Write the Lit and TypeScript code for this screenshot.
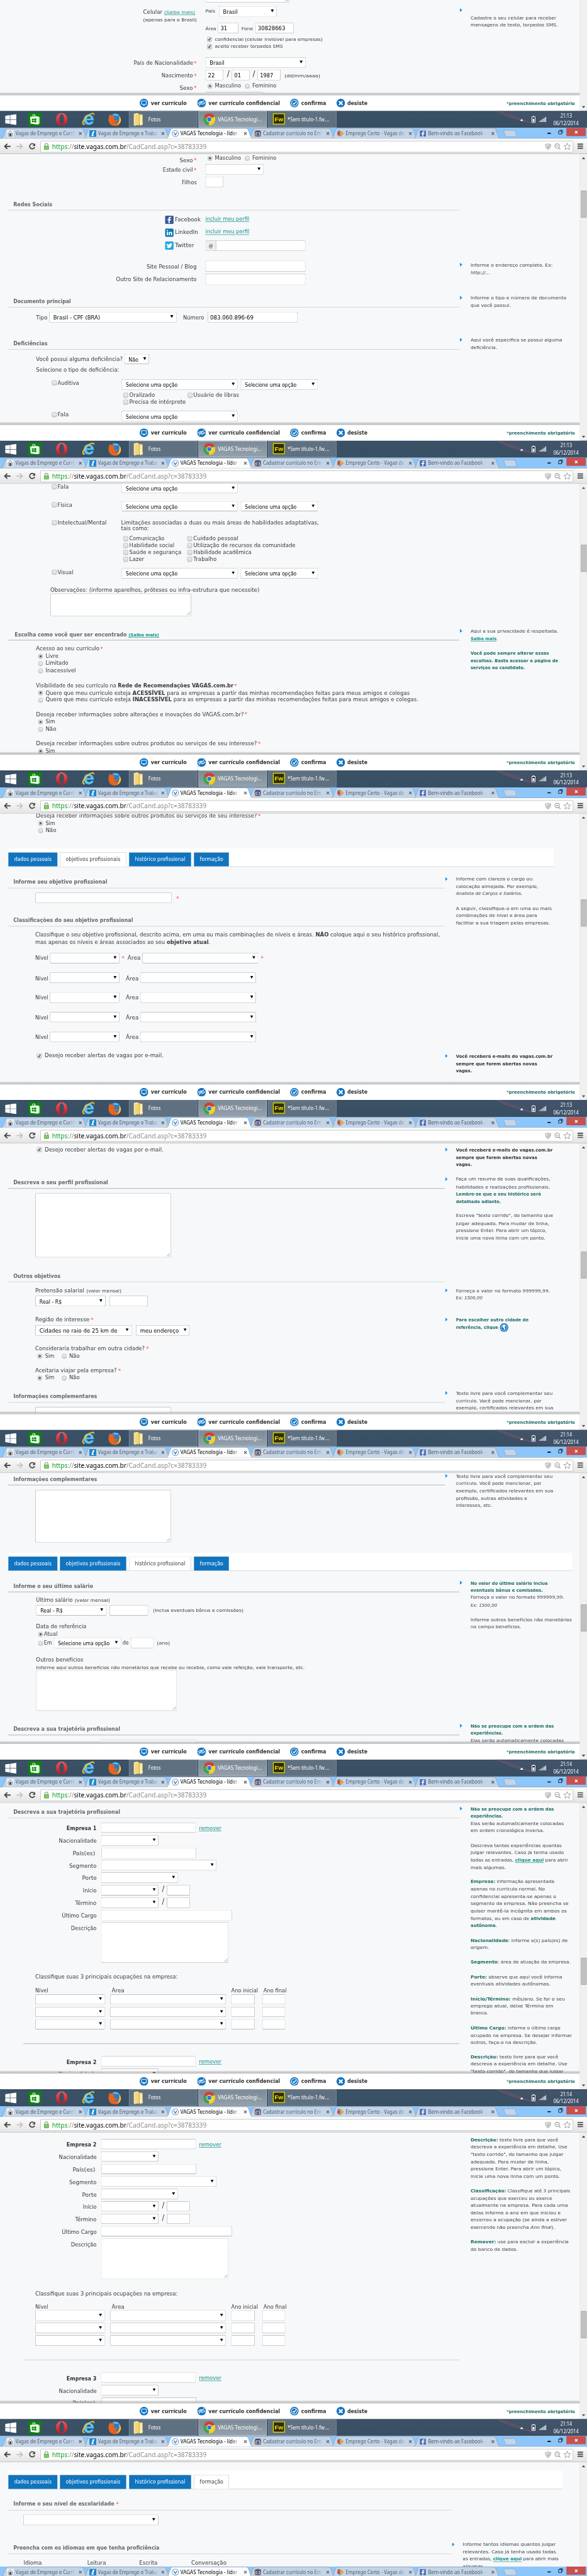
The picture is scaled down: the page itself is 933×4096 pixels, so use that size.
import { LitElement, html, svg, css, nothing, TemplateResult } from "lit";
import { customElement, property } from "lit/decorators.js";
import { classMap } from "lit/directives/class-map.js";
import { styleMap } from "lit/directives/style-map.js";

type Body = string | TemplateResult;
interface Cell { x: number; w: number; dy: number; body: unknown; }
interface Row { mid: number; h: number; cells: Cell[]; }

/* A run of text condensed or stretched to an exact advance width. */
@customElement("fit-text")
class FitText extends LitElement {
  @property({ type: Number }) w = 0;
  static styles = css`
    :host { display: block; flex: none; white-space: nowrap; }
    .run { display: inline-block; transform-origin: 0 50%; text-decoration: inherit; }
  `;
  render() {
    return html`<span class="run"><slot></slot></span>`;
  }
  updated() {
    const run = this.renderRoot.querySelector<HTMLElement>(".run")!;
    this.style.width = `${this.w}px`;
    run.style.transform = "none";
    const box = this.getBoundingClientRect().width;
    const natural = run.getBoundingClientRect().width;
    if (box && natural) run.style.transform = `scaleX(${box / natural})`;
  }
}

/* ---------- cells ---------- */
const t = (x: number, end: number, body: Body, cls = "", dy = 0): Cell => ({
  x, w: end - x, dy, body: html`<fit-text class="txt ${cls}" .w=${end - x}>${body}</fit-text>`,
});
const star = (x: number, cls = "", dy = 0): Cell => t(x, x + 6.5, "*", `star ${cls}`, dy);
const sel = (x: number, w: number, label = "", lw = 0): Cell => ({
  x, w, dy: 0, body: html`<div class="box select">
    ${label ? html`<fit-text class="val" .w=${lw}>${label}</fit-text>` : nothing}
    <svg class="caret" viewBox="0 0 8 7"><path d="M0 0H8L4 7Z"/></svg></div>`,
});
const inp = (x: number, w: number, label = "", lw = 0): Cell => ({
  x, w, dy: 0, body: html`<div class="box input">${label ? html`<fit-text class="val" .w=${lw}>${label}</fit-text>` : nothing}</div>`,
});
const area = (x: number, w: number): Cell => ({
  x, w, dy: 0, body: html`<div class="box area"><svg class="grip" viewBox="0 0 9 9"><path d="M1 8L8 1M5 8L8 5"/></svg></div>`,
});
const chk = (x: number, on = false, dy = 0): Cell => ({
  x, w: 11, dy, body: html`<div class="chk">${on ? html`<svg viewBox="0 0 11 11"><path d="M2.5 5.5L4.5 8.3L8.5 1.6"/></svg>` : nothing}</div>`,
});
const rad = (x: number, on = false, dy = 0): Cell => ({ x, w: 11, dy, body: html`<div class="rad">${on ? html`<i></i>` : nothing}</div>` });
const line = (x: number, end: number): Cell => ({ x, w: end - x, dy: 0, body: html`<div class="line"></div>` });
const raw = (x: number, w: number, body: unknown, dy = 0): Cell => ({ x, w, dy, body });

/* ---------- rows ---------- */
const row = (mid: number, h: number, ...cells: Cell[]): Row => ({ mid, h, cells });
const txt = (mid: number, ...cells: Cell[]): Row => row(mid, 16, ...cells);
const field = (top: number, ...cells: Cell[]): Row => row(top + 12.2, 24.4, ...cells);
const head = (mid: number, end: number, label: Body, ruleY: number, ruleEnd: number, ...more: Cell[]): Row[] => [
  txt(mid, t(30.5, end, label, "head"), ...more), row(ruleY, 1.5, line(18.5, ruleEnd)),
];

const flow = (rows: Row[], top: number, left: number) => {
  let y = top;
  return rows.map((r) => {
    const gap = r.mid - r.h / 2 - y;
    y = r.mid + r.h / 2;
    let x = left;
    return html`<div class="row" style=${styleMap({ marginTop: `${gap.toFixed(2)}px`, height: `${r.h}px` })}>
      ${r.cells.map((c) => {
        const indent = c.x - x;
        x = c.x + c.w;
        return html`<div class="cell" style=${styleMap({ marginLeft: `${indent.toFixed(2)}px`, width: `${c.w}px`, marginTop: `${c.dy * 2}px` })}>${c.body}</div>`;
      })}</div>`;
  });
};

/* ---------- shared form pieces ---------- */
const SEL = "Selecione uma opção";
const arrowCell = (x: number) => raw(x, 6, html`<svg class="bullet" viewBox="0 0 6 10"><path d="M0 0L6 5L0 10Z"/></svg>`);
const tip = (mid: number, x: number, ...lines: [number, number, Body, string?][]): Row[] => {
  const rows = lines.map(([m, w, b, c]) => txt(m, t(x + 25.5, x + 25.5 + w, b, `tip ${c ?? ""}`)));
  if (mid) rows.unshift(row(mid, 10, arrowCell(x)));
  return rows;
};
const sexo = (mid: number) => txt(mid, t(418, 449, "Sexo", "", 5.4), star(450.5, "", 5), rad(482.5, true), t(500, 561, "Masculino"), rad(570), t(587, 643, "Feminino"));
const b = (s: string) => html`<b class="green">${s}</b>`;

const NAV: [number, number, number, number, string][] = [
  [19, 134, 33, 120, "dados pessoais"],
  [139.5, 294.5, 153, 280, "objetivos profissionais"],
  [299.5, 445, 314, 431, "histórico profissional"],
  [450.5, 533, 464, 518.5, "formação"],
];
const nav = (top: number, end: number, active: number): Row =>
  row(top + 21.3, 42.6, raw(18.5, end - 18.5, html`<nav class="nav">
    ${NAV.map(([a, z, ta, tz, label], i) => html`<div class=${classMap({ tabbtn: true, on: i === active })} style=${styleMap({ width: `${z - a}px` })}>
      <fit-text class="navtxt" .w=${tz - ta}>${label}</fit-text></div>`)}</nav>`));

const company = (n: number, y: number): Row[] => [
  field(y, t(155, 224.5, `Empresa ${n}`, "strong", 2), inp(234.5, 221), t(462.5, 515, "remover", "link", 1)),
  field(y + 29.1, t(136.5, 224.5, "Nacionalidade", "", 2), sel(234.5, 134.5)),
  field(y + 58.2, t(169, 221.5, "País(es)", "", 2), inp(235.5, 221.5)),
];
const companyRest = (y: number): Row[] => [
  field(y + 87.2, t(161, 224.5, "Segmento", "", 2), sel(234.5, 269.5)),
  field(y + 116.3, t(190.5, 224.5, "Porte", "", 2), sel(234.5, 179.5)),
  field(y + 145.3, t(192.5, 224.5, "Início", "", 2), sel(234.5, 134.5), t(377, 382.5, "/", "slash", -3), inp(388, 54)),
  field(y + 174.3, t(175, 224.5, "Término", "", 2), sel(234.5, 134.5), t(377, 382.5, "/", "slash", -3), inp(388, 54)),
  field(y + 203.3, t(143.5, 224.5, "Último Cargo", "", 2), inp(234.5, 305.5)),
  row(y + 279.4, 94.4, t(165, 224.5, "Descrição", "", -33), area(234.5, 297.5)),
  txt(y + 360.3, t(82, 413.5, "Classifique suas 3 principais ocupações na empresa:")),
  txt(y + 392.3, t(82, 112, "Nível"), t(259.5, 289, "Área"), t(537.5, 600, "Ano inicial"), t(613, 667, "Ano final")),
  ...[399.6, 428.7, 457.6].map((d) => field(y + d, sel(82, 162), sel(256, 270), inp(538, 54.5), inp(610, 54))),
  row(y + 515, 1, line(54, 1069)),
];

/* ---------- small pictures ---------- */
const fb = (cls: string) => html`<svg class=${cls} viewBox="0 0 20 20"><rect width="20" height="20" rx="3" fill="#3b5998"/><path d="M11 18V11.5H13.5L14 8.5H11V7Q11 5.5 12.6 5.5H14V3H12Q8.2 3 8.2 6.6V8.5H6V11.5H8.2V18Z" fill="#fff"/></svg>`;
const li = html`<svg class="soc" viewBox="0 0 20 20"><rect width="20" height="20" rx="3" fill="#0a7bb8"/><path d="M4 8H6.8V16H4ZM8.6 8H11.2V9.2Q12 7.8 13.8 7.8Q16.6 7.8 16.6 11.2V16H13.8V11.8Q13.8 10 12.6 10Q11.4 10 11.4 11.8V16H8.6Z" fill="#fff"/><circle cx="5.4" cy="5.4" r="1.5" fill="#fff"/></svg>`;
const tw = html`<svg class="soc" viewBox="0 0 20 20"><rect width="20" height="20" rx="3" fill="#22a7e0"/><path d="M3.5 5Q6 8 9.8 8Q9.3 4.6 12.4 4.4Q13.6 4.4 14.4 5.2L16.4 4.6L15.4 6.2L17 6L15.6 7.4Q15.6 13 11 15.2Q7 16.6 3.2 14.6Q6 14.6 7.4 13.4Q5.2 13 4.8 11.4H6Q3.8 10.4 3.8 8.2L5 8.6Q3 7 3.5 5Z" fill="#fff"/></svg>`;

const FAVICONS = [
  svg`<rect width="16" height="16" fill="#eef4f8"/><path d="M2 9L8 2L14 9M4 8V14H12V8" fill="none" stroke="#555" stroke-width="1"/><path d="M6 7.5H10V14H6Z" fill="#333"/><path d="M0 12Q4 9 8 12T16 12" fill="none" stroke="#999" stroke-width=".7"/>`,
  svg`<rect width="16" height="16" fill="#2187c8"/><path d="M7 3.5L12 2L8.4 11.8H10.6L10 13.6H4.6L7.6 4.8Z" fill="#fff"/>`,
  svg`<circle cx="8" cy="8" r="7.3" fill="#fff" stroke="#2b6cb0" stroke-width="1.2"/><path d="M4.4 5.4L8 11.4L11.6 5.4" fill="none" stroke="#2b6cb0" stroke-width="1.8"/>`,
  svg`<rect width="16" height="16" fill="#c69a63"/><ellipse cx="8" cy="8" rx="7.2" ry="6.8" fill="#2f3f86"/><ellipse cx="8" cy="8.6" rx="5.6" ry="4.2" fill="#cdd8ea"/><circle cx="8" cy="8.6" r="3.2" fill="#27326e"/><circle cx="8" cy="8.2" r="1.2" fill="#fff"/>`,
  svg`<path d="M2 1H8V4H1ZM3 12H8V15H5Z" fill="#4aa0b8"/><path d="M0 4.5H7V11.5H0L2 8Z" fill="#d5383c"/><path d="M7 3H10L15.5 8L10 13H7Z" fill="#f0a830" stroke="#9a6a20" stroke-width=".6"/>`,
  svg`<rect x="1" y="1" width="14" height="14" fill="#4a6db3"/><path d="M9 15V9.6H11.2L11.6 7.2H9V6Q9 4.8 10.2 4.8H11.6V2.6H9.8Q6.8 2.6 6.8 5.4V7.2H5V9.6H6.8V15Z" fill="#fff"/>`,
];
const TABS: [string, number][] = [
  ["Vagas de Emprego e Currí", 137], ["Vagas de Emprego e Traba", 138], ["VAGAS Tecnologia - líder", 133],
  ["Cadastrar currículo no Em", 136], ["Emprego Certo - Vagas de", 137], ["Bem-vindo ao Facebook -", 135],
];

/* ---------- browser chrome ---------- */
const tabStrip = () => html`<div class="strip">
  ${TABS.map(([label, w], i) => html`<div class=${classMap({ tab: true, active: i === 2 })}>
    <svg class="tabshape" viewBox="0 0 201 25" preserveAspectRatio="none"><path class="tabfill" d="M0 25C4 24 5 19 7 13L10 5Q11.5 1 15 1H186Q189.5 1 191 5L194 13C196 19 197 24 201 25Z"/><path class="tabline" d="M0 24.5C4 24 5 19 7 13L10 5Q11.5 1 15 1H186Q189.5 1 191 5L194 13C196 19 197 24 201 24.5"/></svg>
    <div class="tabbody"><svg class="fav" viewBox="0 0 16 16">${FAVICONS[i]}</svg>
      <fit-text class="tabtitle" .w=${w}>${label}</fit-text>
      <svg class="tabx" viewBox="0 0 8 8"><path d="M1 1L7 7M7 1L1 7"/></svg></div>
  </div>`)}
  <svg class="newtab" viewBox="0 0 32 16"><path d="M3 .7H24Q27 .7 28 3L31 13Q31.4 15.3 29 15.3H9Q6 15.3 5 13L1.5 3Q1 .7 3 .7Z"/></svg>
  <div class="winctl">
    <svg class="min" viewBox="0 0 8 3"><rect width="8" height="3"/></svg>
    <svg class="restore" viewBox="0 0 11 11"><path d="M3 1H10V8M.8 3.2H8V10.2H.8Z"/></svg>
    <div class="close"><svg viewBox="0 0 8 8"><path d="M1 1L7 7M7 1L1 7"/></svg></div>
  </div></div>`;

const toolbar = () => html`<div class="toolbar">
  <svg class="nav-i" viewBox="0 0 16 14"><path d="M8 1L2 7L8 13M2.5 7H15.5" fill="none" stroke="#484848" stroke-width="2.8"/></svg>
  <svg class="nav-i" viewBox="0 0 16 14"><path d="M8 1L14 7L8 13M13.5 7H.5" fill="none" stroke="#c3c3c3" stroke-width="2.6"/></svg>
  <svg class="nav-i reload" viewBox="0 0 16 16"><path d="M12.5 3.6A6 6 0 1 0 13.6 10" fill="none" stroke="#4a4a4a" stroke-width="2.6"/><path d="M15 .5V7.2H8.3Z" fill="#4a4a4a"/></svg>
  <div class="omni">
    <svg class="lock" viewBox="0 0 12 16"><path d="M2.5 8V4.5Q2.5 1.2 6 1.2Q9.5 1.2 9.5 4.5V8" fill="none" stroke="#9a9a9a" stroke-width="1.8"/><rect x=".5" y="7" width="11" height="8.5" rx="1" fill="#7ecb60" stroke="#4c9a35"/></svg>
    <fit-text class="url" .w=${359.5}><span class="g">https</span><span class="d">://</span><span class="k">site.vagas.com.br</span><span class="d">/CadCand.asp?c=38783339</span></fit-text>
    <div class="spacer"></div>
    <svg class="oi" viewBox="0 0 16 17"><path d="M8 .8Q11 3 15 2.6Q15.5 12 8 16.2Q.5 12 1 2.6Q5 3 8 .8Z" fill="#dcdcdc" stroke="#999"/><path d="M3 12L12 3V9L6 14.5Z" fill="#bbb"/></svg>
    <svg class="oi" viewBox="0 0 16 17"><circle cx="7" cy="7" r="5.6" fill="none" stroke="#999" stroke-width="1.8"/><path d="M11 11.5L15 15.5M4.6 7H9.4" stroke="#999" stroke-width="2"/></svg>
    <svg class="oi star-i" viewBox="0 0 18 18"><path d="M9 1.2L11.3 6.6L17 7L12.7 10.8L14.1 16.5L9 13.4L3.9 16.5L5.3 10.8L1 7L6.7 6.6Z" fill="#fff" stroke="#8a8a8a" stroke-width="1.2"/></svg>
  </div>
  <svg class="menu" viewBox="0 0 13 13"><path d="M0 1.7H13M0 6.5H13M0 11.3H13" stroke="#555" stroke-width="2.8"/></svg>
</div>`;

const disc = (inner: unknown, cls = "") => html`<svg class="disc ${cls}" viewBox="0 0 20 20"><circle cx="10" cy="10" r="10" fill="#1273c0"/>${inner}</svg>`;
const footer = () => html`<div class="shade"></div><div class="footer">
  ${disc(svg`<rect x="4.5" y="5" width="11" height="8" rx="1" fill="none" stroke="#fff" stroke-width="1.5"/><path d="M8 15.3H12M10 13V15" stroke="#fff" stroke-width="1.5"/>`, "d1")}<fit-text class="f1" .w=${83.5}>ver currículo</fit-text>
  ${disc(svg`<path d="M2.5 10Q10 3.5 17.5 10Q10 16.5 2.5 10Z" fill="none" stroke="#fff" stroke-width="1.5"/><circle cx="10" cy="10" r="2.8" fill="#fff"/><path d="M4 16L17 4" stroke="#1273c0" stroke-width="3"/><path d="M3.5 15.5L16.5 3.5" stroke="#fff" stroke-width="1.5"/>`, "d2")}<fit-text class="f2" .w=${166.5}>ver currículo confidencial</fit-text>
  ${disc(svg`<circle cx="10" cy="10" r="6.8" fill="none" stroke="#fff" stroke-width="1.5"/><path d="M6.8 9.8L9.4 12.8L13.6 6.8" fill="none" stroke="#fff" stroke-width="2"/>`, "d3")}<fit-text class="f3" .w=${58}>confirma</fit-text>
  ${disc(svg`<path d="M5.8 5.8L14.2 14.2M14.2 5.8L5.8 14.2" stroke="#fff" stroke-width="3"/>`, "d4")}<fit-text class="f4" .w=${47}>desiste</fit-text>
  <fit-text class="f5" .w=${159}><span class="ast">*</span>preenchimento obrigatório</fit-text></div>`;

const taskbar = (clock: string) => html`<div class="taskbar">
  <svg class="k1" viewBox="0 0 26 25"><path d="M0 3.8L11 2.2V12H0ZM12 2L26 0V12H12ZM0 13H11V22.6L0 21ZM12 13H26V25L12 22.9Z" fill="#fff"/></svg>
  <svg class="k2" viewBox="0 0 30 30"><rect width="30" height="30" fill="#048b04"/><path d="M4 9L22 8L25.5 10V25L22 27L5.5 25Z" fill="#fff"/><path d="M22 8L25.5 10V25L22 27Z" fill="#d8e8d8"/><path d="M9 9Q9 3.5 12.5 3.5Q16 3.5 16.5 8.5M12.5 8.5Q13.5 4.5 15.5 5" fill="none" stroke="#fff" stroke-width="1.3"/><path d="M8 13.5L12.5 13V17H8ZM13.5 13L18.5 12.5V17H13.5ZM8 18H12.5V22L8 21.5ZM13.5 18H18.5V22.5L13.5 22Z" fill="#048b04"/></svg>
  <svg class="k3" viewBox="0 0 27 30"><defs><linearGradient id="op" x1="0" y1="0" x2="0" y2="1"><stop offset="0" stop-color="#f4595c"/><stop offset="1" stop-color="#c0161c"/></linearGradient></defs><path fill-rule="evenodd" d="M13.5 0A13.5 15 0 1 0 13.5 30A13.5 15 0 1 0 13.5 0ZM13.5 2.6A5.6 12.4 0 1 1 13.5 27.4A5.6 12.4 0 1 1 13.5 2.6Z" fill="url(#op)"/></svg>
  <svg class="k4" viewBox="0 0 30 31"><path fill-rule="evenodd" d="M16.5 4.5Q27.5 5 28.5 18H12Q12.5 23.5 17.5 23.5Q20.5 23.5 21.8 21H28Q25 29 16.5 29Q5 28.5 5 17Q5.5 5 16.5 4.5ZM12 14H21.5Q21 9.5 16.8 9.5Q12.5 9.5 12 14Z" fill="#5cc3f2" stroke="#2d8fd0" stroke-width=".6"/><path d="M4 29Q-2 25 6 14Q14 3 25 .8Q31 0 29 8Q29 2.5 23 4Q13 8 6.5 18Q1.5 27 8 27Q7 30 4 29Z" fill="#f7c52c"/></svg>
  <svg class="k5" viewBox="0 0 30 31"><circle cx="16" cy="13.5" r="12.8" fill="#2a7cc7"/><path d="M10 4Q18 0 25 5Q22 8 17 6Q14 7 10 4Z" fill="#6fb8ea"/><path d="M1.5 8L4 2.5Q6 4 6.5 6.5Q10 5 12 7L15.5 11.5Q13 13 12 14Q15 18 20 16.5Q23 15.5 21 19Q17 23 12.5 19.5Q16 26 22.5 22Q28 17 25 7Q31 13 29 20Q25.5 31 14.5 30.5Q2 29.5 .5 18Q0 12 1.5 8Z" fill="#e8641b"/><path d="M25 7Q31 13 29 20Q26 27 20 29Q28 20 25 7Z" fill="#fcc93a"/></svg>
  <div class="app a1"><svg class="folder" viewBox="0 0 28 31"><path d="M12 2L21 4V29L12 27Z" fill="#d9b95b"/><path d="M0 2L9 0L12 3V27L3 30L0 28Z" fill="#fbe9a0"/><path d="M3 4L12 3V30L8 27L3 30Z" fill="#f3d678"/><path d="M15 5L20 4.5V22L22 24L16 30L14 27Z" fill="#fff1b5"/></svg><fit-text .w=${29}>Fotos</fit-text></div>
  <div class="app a2"><svg class="chrome" viewBox="0 0 28 28"><circle cx="14" cy="14" r="14" fill="#3da544"/><path d="M14 14L1.9 7A14 14 0 0 1 26.1 7L27 8.5H14Z" fill="#e03a2d"/><path d="M14 14L26.3 7.5A14 14 0 0 1 13 28Z" fill="#fbd116"/><circle cx="14" cy="14" r="6.5" fill="#f3f3f3"/><circle cx="14" cy="14" r="5" fill="#3a77c9"/></svg><fit-text .w=${102}>VAGAS Tecnologi...</fit-text></div>
  <div class="app a3"><div class="fw"><fit-text .w=${20}>Fw</fit-text></div><fit-text .w=${98}>*Sem título-1.fw....</fit-text></div>
  <svg class="glow" viewBox="0 0 216 40" preserveAspectRatio="none"><path d="M0 0Q60 30 150 40H216V0Z" fill="#5a5f7c" opacity=".22"/><path d="M2 0Q40 22 110 36Q50 12 12 0Z" fill="#8a5368" opacity=".35"/></svg>
  <div class="tray">
    <svg class="up" viewBox="0 0 8 5"><path d="M4 0L8 5H0Z" fill="#fff"/></svg>
    <svg class="bat" viewBox="0 0 9 16"><path d="M3 0H6V2H3Z" fill="#fff"/><rect x=".8" y="2.3" width="7.4" height="12.9" fill="#1c2733" stroke="#fff" stroke-width="1.5"/><rect x="2.6" y="6.5" width="3.8" height="7" fill="#fff"/></svg>
    <svg class="sig" viewBox="0 0 16 12"><path d="M0 9.5H2V12H0ZM3.5 7.5H5.5V12H3.5ZM7 5H9V12H7ZM10.5 2.5H12.5V12H10.5ZM14 0H16V12H14Z" fill="#fff"/></svg>
    <div class="clock"><fit-text .w=${27}>${clock}</fit-text><fit-text .w=${58.5}>06/12/2014</fit-text></div>
  </div></div>`;

/* ---------- the captured windows ---------- */
interface Shot { from?: number; to?: number; thumb?: number; clock?: string; main: Row[]; side: Row[]; }

const shots: Shot[] = [
  {
    from: 470, clock: "21:13",
    main: [
      row(466, 20, area(478, 196)),
      row(496.5, 24.4, t(333, 378, "Celular", "", 2), t(382, 454, "(Saiba mais)", "small link", 3), t(478, 501, "País", "small", 1), sel(509, 135, "Brasil", 34)),
      txt(516.5, t(333, 458, "(apenas para o Brasil)", "small")),
      row(535.5, 24.4, t(478, 503, "Área", "small", 1), inp(507, 48, "31", 16), t(562, 589, "Fone", "small", 1), inp(593.5, 90, "30828663", 64)),
      txt(562, chk(482, true, -1), t(500, 751, "confidencial (celular invisível para empresas)", "small")),
      txt(579.2, chk(482, true, -1), t(500, 658, "aceito receber torpedos SMS", "small")),
      row(615.4, 24.4, t(311, 449.5, "País de Nacionalidade", "", 2), star(450.5, "", 1.5), sel(478, 233.5, "Brasil", 34)),
      row(644.4, 24.4, t(376, 449, "Nascimento", "", 2), star(450.5, "", 1.5), inp(478, 41.5, "22", 16), t(527.5, 533.5, "/", "slash", -3), inp(539, 41.5, "01", 16), t(588, 594, "/", "slash", -3), inp(599, 53.5, "1987", 31), t(662, 745, "(dd/mm/aaaa)", "small", 3)),
      sexo(670.5),
      field(684.3, sel(478, 135)),
    ],
    side: tip(493.7, 1069.5, [512, 199.5, "Cadastre o seu celular para receber"], [528.8, 203, "mensagens de texto, torpedos SMS."]),
  },
  {
    thumb: 146, clock: "21:13",
    main: [
      sexo(70.3),
      field(84.3, t(379, 449, "Estado civil", "", 2), star(450.5, "", 1.5), sel(478, 135)),
      field(113.2, t(422.5, 457.5, "Filhos", "", 2), inp(478, 41.5)),
      ...head(177.7, 121, "Redes Sociais", 191.6, 1069),
      row(214, 20, raw(384, 20, fb("soc")), t(407, 467, "Facebook", "", -1), t(478, 580, "incluir meu perfil", "link", -2)),
      row(244, 20, raw(384, 20, li), t(407, 461, "LinkedIn", "", -1), t(478, 580, "incluir meu perfil", "link", -2)),
      row(274.2, 24.6, raw(384, 20, tw), t(407, 451.5, "Twitter", "", -1), raw(478, 232.5, html`<div class="box at"><span>@</span></div>`)),
      row(322, 25.5, t(341, 457.5, "Site Pessoal / Blog", "", 1.5), inp(478, 232.5)),
      row(352, 25.5, t(270, 457.5, "Outro Site de Relacionamento", "", 1.5), inp(478, 232.5)),
      ...head(403.7, 164.6, "Documento principal", 417.5, 1069),
      field(428.2, t(83.6, 110, "Tipo", "", 1.5), sel(114, 297, "Brasil - CPF (BRA)", 109), t(426, 475, "Número", "", 1.5), inp(482.6, 210, "083.060.896-69", 101)),
      ...head(501.7, 110, "Deficiências", 515.5, 1069),
      field(526.2, t(83.6, 285, "Você possui alguma deficiência?", "", 1), sel(289, 58.5, "Não", 23)),
      txt(564.4, t(83.6, 277, "Selecione o tipo de deficiência:")),
      field(585.4, chk(120.5, false, -3.5), t(134, 184, "Auditiva", "", -3), sel(283, 270, SEL, 120), sel(560, 179.5, SEL, 120)),
      txt(622.6, chk(286.5), t(300.5, 360, "Oralizado"), chk(437), t(449.5, 555.8, "Usuário de libras")),
      txt(638.3, chk(286.5), t(300.5, 432, "Precisa de intérprete")),
      field(659.3, chk(120.5, false, -3.5), t(134, 160, "Fala", "", -3), sel(283, 270, SEL, 120)),
    ],
    side: [
      ...tip(318.7, 1069.5, [319.5, 191, "Informe o endereço completo. Ex:"], [336.7, 45, html`<i>http://...</i>`]),
      ...tip(395.6, 1069.5, [396.4, 223, "Informe o tipo e número de documento"], [413.6, 94, "que você possui."]),
      ...tip(494, 1069.5, [494.8, 213.5, "Aqui você especifica se possui alguma"], [511.6, 62, "deficiência."]),
    ],
  },
  {
    thumb: 203, clock: "21:13",
    main: [
      field(59, chk(120.5, false, -3.5), t(134, 160, "Fala", "", -3), sel(283, 270, SEL, 120)),
      field(101.1, chk(120.5, false, -3.5), t(134, 168, "Física", "", -3), sel(283, 270, SEL, 120), sel(560, 179.5, SEL, 120)),
      txt(151.8, chk(120.5), t(134, 248, "Intelectual/Mental"), t(282, 742, "Limitações associadas a duas ou mais áreas de habilidades adaptativas,", "", -1)),
      txt(165.2, t(282, 346.5, "tais como:")),
      txt(188.3, chk(286.5), t(300.5, 382, "Comunicação"), chk(435.5), t(449.5, 554, "Cuidado pessoal")),
      txt(204.4, chk(286.5), t(300.5, 405, "Habilidade social"), chk(435.5), t(449.5, 687, "Utilização de recursos da comunidade")),
      txt(220.4, chk(286.5), t(300.5, 421.5, "Saúde e segurança"), chk(435.5), t(449.5, 584.5, "Habilidade acadêmica")),
      txt(236.5, chk(286.5), t(300.5, 335, "Lazer"), chk(435.5), t(449.5, 503.5, "Trabalho")),
      field(257.4, chk(120.5, false, -3.5), t(134, 170.5, "Visual", "", -3), sel(283, 270, SEL, 120), sel(560, 179.5, SEL, 120)),
      txt(308.4, t(117, 603.7, "Observações: (informe aparelhos, próteses ou infra-estrutura que necessite)")),
      row(342.5, 52.4, area(117, 328)),
      txt(412, t(34, 295, "Escolha como você quer ser encontrado", "head"), t(299, 370, "(Saiba mais)", "small strong link", 1)),
      row(425.3, 1.5, line(18.5, 1069)),
      txt(445.4, t(83.6, 231, "Acesso ao seu currículo"), star(233.5, "pink")),
      txt(462.4, rad(89, true), t(105.5, 135.5, "Livre")),
      txt(479.4, rad(89), t(105.5, 158.5, "Limitado")),
      txt(496.3, rad(89), t(105.5, 176, "Inacessível")),
      txt(530.7, t(83.6, 542.7, html`Visibilidade de seu currículo na <b>Rede de Recomendações VAGAS.com.br</b>`), star(545.5, "pink")),
      txt(547.7, rad(89, true), t(105.5, 953, html`Quero que meu currículo esteja <b>ACESSÍVEL</b> para as empresas a partir das minhas recomendações feitas para meus amigos e colegas`)),
      txt(564.6, rad(89), t(105.5, 973, html`Quero que meu currículo esteja <b>INACESSÍVEL</b> para as empresas a partir das minhas recomendações feitas para meus amigos e colegas.`)),
      txt(598.6, t(83.6, 567, "Deseja receber informações sobre alterações e inovações do VAGAS.com.br?"), star(569.5)),
      txt(615.5, rad(89, true), t(105.5, 128, "Sim")),
      txt(632.5, rad(89), t(105.5, 130.5, "Não")),
      txt(666.4, t(83.6, 597.6, "Deseja receber informações sobre outros produtos ou serviços de seu interesse?"), star(600.5)),
      txt(683.4, rad(89, true), t(105.5, 128, "Sim")),
    ],
    side: [
      ...tip(403.5, 1069.5, [404.4, 204, "Aqui a sua privacidade é respeitada."], [421.8, 63.5, html`<b class="link">Saiba mais</b>.`],
        [455.7, 182.5, "Você pode sempre alterar essas", "hot"], [472.7, 204, "escolhas. Basta acessar a página de", "hot"], [489.6, 127, "serviços ao candidato.", "hot"]),
    ],
  },
  {
    thumb: 261, clock: "21:13",
    main: [
      txt(66.6, t(83.6, 597.6, "Deseja receber informações sobre outros produtos ou serviços de seu interesse?"), star(600.5)),
      txt(83.6, rad(89, true), t(105.5, 128, "Sim")),
      txt(100.2, rad(89), t(105.5, 130.5, "Não")),
      nav(142, 1287.6, 1),
      ...head(220.4, 249, "Informe seu objetivo profissional", 234.3, 1035),
      field(245, inp(82, 318), star(410, "pink", 1.5)),
      ...head(309.8, 309, "Classificações do seu objetivo profissional", 323.3, 1035),
      txt(343.4, t(82, 1023.6, html`Classifique o seu objetivo profissional, descrito acima, em uma ou mais combinações de níveis e áreas. <b>NÃO</b> coloque aqui o seu histórico profissional,`)),
      txt(360.4, t(82, 489.5, html`mas apenas os níveis e áreas associados ao seu <b>objetivo atual</b>.`)),
      field(385.3, t(82, 112, "Nível", "", 1), sel(116, 162), star(283, "pink", 1), t(297, 327, "Área", "", 1), sel(331, 270), star(607, "pink", 1)),
      ...[431.4, 477.3, 523.2, 569.2].map((y) => field(y, t(82, 112, "Nível", "", 1), sel(116, 162), t(292.5, 322, "Área", "", 1), sel(326, 270))),
      txt(625.6, chk(85.5, true), t(104, 380.5, "Desejo receber alertas de vagas por e-mail.")),
    ],
    side: [
      ...tip(213, 1035.5, [213.7, 178, "Informe com clareza o cargo ou"], [230.5, 191.5, "colocação almejada. Por exemplo,"], [247.7, 155, html`<i>Analista de Cargos e Salários</i>.`],
        [281.7, 223, "A seguir, classifique-o em uma ou mais"], [298.7, 189, "combinações de nível e área para"], [315.7, 219, "facilitar a sua triagem pelas empresas."]),
      ...tip(625.6, 1035.5, [626.7, 225, "Você receberá e-mails do vagas.com.br", "strong"], [643.9, 189, "sempre que forem abertas novas", "strong"], [661, 37.5, "vagas.", "strong"]),
    ],
  },
  {
    thumb: 313, clock: "21:14",
    main: [
      txt(75.5, chk(85.5, true), t(104, 380.5, "Desejo receber alertas de vagas por e-mail.")),
      ...head(152.6, 251, "Descreva o seu perfil profissional", 166.2, 1035),
      row(252.4, 150.2, area(82, 316)),
      ...head(369.7, 140, "Outros objetivos", 383.4, 1035),
      txt(403.7, t(82, 196, "Pretensão salarial"), t(200.5, 282, "(valor mensal)", "small", 1)),
      field(416.3, sel(82, 163.5, "Real - R$", 52), inp(254.5, 89.5)),
      txt(471.7, t(82, 208, "Região de interesse"), star(211)),
      field(484.3, sel(82, 224.5, "Cidades no raio de 25 km de", 181), sel(315.5, 125.5, "meu endereço", 90)),
      txt(539.3, t(82, 337, "Consideraria trabalhar em outra cidade?"), star(339.5)),
      txt(556.3, rad(86.5, true), t(104.5, 126, "Sim"), rad(143.5), t(161, 185.5, "Não")),
      txt(590.7, t(82, 271.5, "Aceitaria viajar pela empresa?"), star(275)),
      txt(607.3, rad(86.5, true), t(104.5, 126, "Sim"), rad(143.5), t(161, 185.5, "Não")),
      ...head(650.7, 225.5, "Informações complementares", 664.4, 1035),
      row(736.5, 122.4, area(82, 316)),
    ],
    side: [
      ...tip(75.5, 1035.5, [76.6, 225, "Você receberá e-mails do vagas.com.br", "strong"], [93.7, 189, "sempre que forem abertas novas", "strong"], [110.9, 37.5, "vagas.", "strong"]),
      ...tip(144.8, 1035.5, [145.5, 219.5, "Faça um resumo de suas qualificações,"], [162.6, 219, "habilidades e realizações profissionais."],
        [179.8, 198, "Lembre-se que o seu histórico será", "hot"], [197, 105, "detalhado adiante.", "hot"],
        [230.5, 226, html`Escreva "texto corrido", do tamanho que`], [247.6, 217, "julgar adequado. Para mudar de linha,"], [264.8, 211, "pressione Enter. Para abrir um tópico,"], [282, 208, "inicie uma nova linha com um ponto."]),
      ...tip(403.7, 1035.5, [404.7, 219, "Forneça o valor no formato 999999,99."], [421.7, 62, html`Ex: <i>1500,00</i>`]),
      row(471.7, 10, arrowCell(1035.5)),
      txt(472.7, t(1061, 1230, "Para escolher outra cidade de", "tip hot")),
      row(490, 20, t(1061, 1159.5, "referência, clique", "tip hot"), raw(1163, 20, disc(svg`<circle cx="10" cy="10" r="7" fill="#1273c0" stroke="#fff" stroke-width="1.3"/><path d="M7 4.8L12 4L13.5 7L11 9L13 12L10.5 15.5L9 11L6 9Z" fill="#fff"/>`))),
      ...tip(642.7, 1035.5, [643.7, 225, "Texto livre para você complementar seu"], [661, 199, "currículo. Você pode mencionar, por"], [678, 226.5, "exemplo, certificados relevantes em sua"], [695, 166, "profissão, outras atividades e"]),
    ],
  },
  {
    thumb: 367, clock: "21:14",
    main: [
      ...head(75.6, 225.5, "Informações complementares", 89.2, 1035),
      row(161.5, 122.3, area(82, 316)),
      nav(246.9, 1331, 2),
      ...head(324.5, 216, "Informe o seu último salário", 338.2, 1069),
      txt(356.6, t(84, 169, "Último salário"), t(173.5, 255.5, "(valor mensal)", "small", 1)),
      field(368.3, sel(84, 163.5, "Real - R$", 52), inp(255, 90), t(355.5, 566, "(inclua eventuais bônus e comissões)", "small", 2)),
      txt(419.5, t(84, 201, "Data de referência")),
      txt(436.4, rad(89, true), t(102, 134, "Atual")),
      field(444.2, rad(89, false, 1), t(102, 121, "Em", "", 1), sel(125, 156.5, SEL, 120), t(285, 299.5, "de", "", 1), inp(303.5, 54.5), t(365, 395.5, "(ano)", "small", 2)),
      txt(495.8, t(84, 194, "Outros benefícios")),
      txt(513.6, t(84, 709, "Informe aqui outros benefícios não monetários que recebe ou recebia, como vale refeição, vale transporte, etc.", "small")),
      row(567.5, 94.2, area(84, 328)),
      ...head(657.5, 279, "Descreva a sua trajetória profissional", 671.2, 1069),
      field(682.3, inp(234.5, 221)),
    ],
    side: [
      ...tip(67.8, 1035.5, [68.6, 225, "Texto livre para você complementar seu"], [85.6, 199, "currículo. Você pode mencionar, por"], [102.8, 226.5, "exemplo, certificados relevantes em sua"], [119.6, 166, "profissão, outras atividades e"], [136.7, 84.5, "interesses, etc."]),
      ...tip(316.7, 1069.5, [317.6, 179.5, "No valor do último salário inclua", "hot"], [334.5, 168.5, "eventuais bônus e comissões.", "hot"], [351.5, 218, "Forneça o valor no formato 999999,99."], [368.6, 62, html`Ex: <i>1500,00</i>`],
        [402.6, 236, "Informe outros benefícios não monetários"], [419.5, 118, "no campo benefícios."]),
      ...tip(649.7, 1069.5, [650.6, 194, "Não se preocupe com a ordem das", "hot"], [667.5, 75.5, "experiências.", "hot"], [684.4, 217, "Elas serão automaticamente colocadas"]),
    ],
  },
  {
    thumb: 422, clock: "21:14",
    main: [
      ...head(82.6, 279, "Descreva a sua trajetória profissional", 96.4, 1069),
      ...company(1, 107.1), ...companyRest(107.1),
      ...company(2, 651.1),
    ],
    side: tip(74.4, 1069.5,
      [75.5, 194, "Não se preocupe com a ordem das", "hot"], [92.3, 75.5, "experiências.", "hot"],
      [109.7, 217, "Elas serão automaticamente colocadas"], [126.5, 171.5, "em ordem cronológica inversa."],
      [160.7, 212, "Descreva tantas experiências quantas"], [177.5, 217, "julgar relevantes. Caso já tenha usado"],
      [194.9, 227, html`todas as entradas, <b class="link">clique aqui</b> para abrir`], [211.7, 82.5, "mais algumas."],
      [245.4, 195, html`${b("Empresa:")} informação apresentada`], [262.7, 173, "apenas no currículo normal. No"],
      [279.6, 199, "confidencial apresenta-se apenas o"], [296.4, 228, "segmento da empresa. Não preencha se"],
      [313.7, 224, "quiser mantê-la incógnita em ambos os"], [330.6, 198, html`formatos, ou em caso de ${b("atividade")}`], [347.4, 61.5, html`${b("autônoma")}.`],
      [381.6, 226, html`${b("Nacionalidade")}: informe o(s) país(es) de`], [398.4, 43, "origem."],
      [432.6, 233, html`${b("Segmento")}: área de atuação da empresa.`],
      [466.8, 213.5, html`${b("Porte:")} observe que aqui você informa`], [483.6, 186, "eventuais atividades autônomas."],
      [517.8, 219.5, html`${b("Início/Término:")} mês/ano. Se for o seu`], [534.7, 193, "emprego atual, deixe Término em"], [551.5, 41, "branco."],
      [585.7, 209, html`${b("Último Cargo:")} informe o último cargo`], [603, 236, "ocupado na empresa. Se desejar informar"], [620, 155, "outros, faça-o na descrição."],
      [653.5, 204, html`${b("Descrição:")} texto livre para que você`], [670.4, 225, "descreva a experiência em detalhe. Use"], [687.4, 216, html`"texto corrido", do tamanho que julgar`]),
  },
  {
    thumb: 477, clock: "21:14",
    main: [...company(2, 75.9), ...companyRest(75.9), ...company(3, 620.3)],
    side: tip(0, 1069.5,
      [78.6, 204, html`${b("Descrição:")} texto livre para que você`], [95.5, 225, "descreva a experiência em detalhe. Use"], [112.5, 216, html`"texto corrido", do tamanho que julgar`],
      [129.7, 182, "adequado. Para mudar de linha,"], [146.5, 211, "pressione Enter. Para abrir um tópico,"], [163.6, 208, "inicie uma nova linha com um ponto."],
      [197.5, 232, html`${b("Classificação:")} Classifique até 3 principais`], [214.7, 190, "ocupações que exerceu ou exerce"], [231.5, 226.5, "atualmente na empresa. Para cada uma"],
      [248.6, 210, "delas informe o ano em que iniciou e"], [265.4, 224.5, "encerrou a ocupação (se ainda a estiver"], [282.5, 196, html`exercendo não preencha <i>Ano final</i>).`],
      [316.5, 228.5, html`${b("Remover:")} use para excluir a experiência`], [333.6, 110, "do banco de dados."]),
  },
  {
    to: 304,
    main: [
      nav(81, 1309, 3),
      ...head(158, 265.5, "Informe o seu nível de escolaridade", 172.5, 1050.5, star(269.5)),
      field(183.3, sel(54, 314.5)),
      ...head(260.4, 370.5, "Preencha com os idiomas em que tenha proficiência", 274.4, 1050.5),
      txt(295.7, t(55, 97.5, "Idioma"), t(203, 246.5, "Leitura"), t(323.5, 366, "Escrita"), t(445, 527, "Conversação")),
    ],
    side: tip(252.5, 1051.5, [253.2, 216, "Informe tantos idiomas quantos julgar"], [270.3, 217, "relevantes. Caso já tenha usado todas"], [287.3, 223, html`as entradas, <b class="link">clique aqui</b> para abrir mais`], [304.4, 51, "algumas."]),
  },
];

const renderShot = (s: Shot) => {
  const top = s.from ?? 61;
  const end = s.to ?? 690;
  return html`${s.from ? nothing : html`${tabStrip()}${toolbar()}`}
    <div class="body">
      <div class="view">
        <div class="content" style=${styleMap({ height: `${end - top}px` })}>
          <div class="main">${flow(s.main, top, 0)}</div>
          <div class="side">${flow(s.side, top, 1035)}</div>
        </div>
        ${s.to ? nothing : footer()}
      </div>
      <div class="scroll">
        ${s.from ? nothing : html`<svg class="sup" viewBox="0 0 8 5"><path d="M4 0L8 5H0Z"/></svg>`}
        ${s.thumb ? html`<div class="thumb" style=${styleMap({ marginTop: `${s.thumb - 73}px` })}></div>` : nothing}
        <div class="spacer"></div>
        ${s.to ? nothing : html`<svg class="sdn" viewBox="0 0 8 5"><path d="M0 0H8L4 5Z"/></svg>`}
      </div>
    </div>
    ${s.to ? nothing : taskbar(s.clock ?? "")}`;
};

@customElement("app-root")
class AppRoot extends LitElement {
  static styles = css`
    :host { display: block; width: 933px; height: 4096px; overflow: hidden; }
    * { box-sizing: border-box; }
    svg { display: block; flex: none; }
    .page { width: 1366px; height: 6000px; overflow: hidden; transform-origin: 0 0; transform: scale(0.68302, 0.682667); background: #f6f7f9;
      font-family: "DejaVu Sans Condensed", "DejaVu Sans", sans-serif; font-size: 13px; line-height: 16px; color: #383838; }
    .body { display: flex; }
    .view { width: 1348.5px; flex: none; background: #f6f8fa; }
    .content { display: flex; overflow: hidden; }
    .main { width: 1035px; flex: none; display: flow-root; }
    .side { width: 313px; flex: none; display: flow-root; }
    .row { display: flex; align-items: center; }
    .row > .cell { flex: none; }
    .cell:has(> .box) { align-self: stretch; }
    .small { font-size: 11px; font-family: "DejaVu Sans", sans-serif; }
    .tip { font-size: 11px; font-family: "DejaVu Sans", sans-serif; color: #3a3e42; }
    .strong { font-weight: bold; color: #303030; }
    .head { font-weight: bold; color: #666; }
    .hot, .green { font-weight: bold; color: #1d6b64; }
    .link { color: #148f86; text-decoration: underline; text-underline-offset: 2px; }
    .star { color: #ff4a1c; font-size: 14px; }
    .pink { color: #ff3860; }
    .slash { font-size: 17px; }
    .line { height: 1.5px; background: #c4c6c8; }
    .box { height: 100%; background: #fff; border: 1px solid #adafb1; border-bottom-color: #9c9ea0; border-radius: 3px; display: flex; align-items: center; overflow: hidden; }
    .select { padding: 3px 6px 0 9px; justify-content: space-between; }
    .input { padding: 3px 0 0 5px; }
    .val { color: #000; }
    .caret { width: 7.5px; height: 6.5px; margin: -5px 0 0 auto; fill: #000; }
    .area { align-items: flex-end; justify-content: flex-end; }
    .grip { width: 9px; height: 9px; margin: 0 1px 1px 0; fill: none; stroke: #777; stroke-width: 1; }
    .at { align-items: stretch; }
    .at span { width: 24px; background: #eee; border-right: 1px solid #b4b6b8; color: #222; font-size: 11px; line-height: 25px; text-align: center; }
    .chk, .rad { width: 11px; height: 11px; border: 1px solid #a6a6a6; background: linear-gradient(#eee, #dcdcdc); border-radius: 2px; box-shadow: 0 1px 0 #d4d4d4; }
    .chk svg { width: 9px; height: 9px; fill: none; stroke: #333; stroke-width: 2; }
    .rad { border-radius: 50%; display: grid; place-items: center; }
    .rad i { width: 5px; height: 5px; border-radius: 50%; background: #555; }
    .soc { width: 20px; height: 20px; }
    .bullet { width: 6px; height: 9px; fill: #1b8ef0; }

    .nav { height: 42.6px; background: #fff; border-bottom: 1px solid #c8c8c8; display: flex; align-items: flex-end; gap: 5.4px; padding-left: .5px; }
    .tabbtn { height: 33px; background: #1074bf; border: 1px solid #4d93c8; border-top-color: #b9bcc0; border-bottom: 0; border-radius: 2px 2px 0 0; display: flex; justify-content: center; align-items: center; font-size: 12px; color: #fff; }
    .tabbtn.on { background: #fff; border-color: #c8c8c8; color: #3c3c3c; }

    .shade { height: 7px; margin-top: -5px; position: relative; background: linear-gradient(rgba(120,120,120,.08), rgba(120,120,120,.36) 45%, rgba(120,120,120,.4)); }
    .footer { height: 36px; background: #fff; display: flex; align-items: center; padding-left: 325px; font-weight: bold; font-size: 13px; color: #2e2e2e; }
    .disc { width: 20px; height: 20px; }
    .f1 { margin-left: 6px; } .d2 { margin-left: 24px; background: #eef0f2; } .f2 { margin-left: 6px; }
    .d3 { margin-left: 24px; } .f3 { margin-left: 6px; } .d4 { margin-left: 24px; } .f4 { margin-left: 5px; }
    .f5 { margin-left: 324px; margin-top: 2px; font-size: 11px; color: #1d6b64; font-family: "DejaVu Sans", sans-serif; }
    .ast { font-weight: normal; }

    .scroll { flex: 1; background: #f0f0f0; border-left: 1px solid #e8e8e8; display: flex; flex-direction: column; }
    .sup, .sdn { width: 8px; height: 5px; fill: #4a4a4a; }
    .sup { margin: 7px 0 0 4.5px; } .sdn { margin: 0 0 6px 4.5px; }
    .thumb { width: 13.5px; height: 62.5px; margin-left: 2px; background: #c0c0c0; border: 1px solid #a5a5a5; }
    .spacer { flex: 1; }

    .strip { height: 25px; background: #8cc6fa; box-shadow: inset 0 -1px 0 #8594a6; display: flex; padding-left: 3px; font-family: "Noto Sans", "Open Sans", sans-serif; font-size: 12px; color: #4f5b68; }
    .tab { width: 201px; height: 25px; margin-right: -9px; flex: none; display: grid; }
    .tab > * { grid-area: 1 / 1; }
    .tabshape { width: 201px; height: 25px; }
    .tabfill { fill: #c5d5e8; } .tabline { fill: none; stroke: #8796aa; stroke-width: 1; }
    .active { z-index: 2; color: #000; }
    .active .tabfill { fill: #fcfcfc; }
    .tabbody { display: flex; align-items: center; padding-left: 13px; z-index: 1; }
    .fav { width: 16px; height: 16px; margin-right: 4px; }
    .tabtitle { -webkit-mask-image: linear-gradient(90deg, #000 88%, rgba(0,0,0,.25)); mask-image: linear-gradient(90deg, #000 88%, rgba(0,0,0,.25)); }
    .tabx { width: 8px; height: 8px; margin: 1px 13px 0 auto; fill: none; stroke: #555f6b; stroke-width: 1.8; }
    .newtab { width: 32px; height: 16px; margin: 5px 0 0 16px; fill: #c5d5e8; stroke: #8ba0b8; stroke-width: 1; }
    .winctl { margin-left: auto; margin-right: 3px; display: flex; align-items: flex-start; }
    .min { width: 8px; height: 3px; margin: 11px 17px 0 0; fill: #111; }
    .restore { width: 11px; height: 11px; margin: 4px 8px 0 0; fill: none; stroke: #111; stroke-width: 1.4; }
    .close { width: 45px; height: 19px; background: #c75050; display: grid; place-items: center; }
    .close svg { width: 8px; height: 8px; stroke: #fff; stroke-width: 2; fill: none; }

    .toolbar { height: 36px; background: linear-gradient(#fcfcfc, #e4e4e4); border-bottom: 1.5px solid #a9abad; display: flex; align-items: center; padding-left: 9px; }
    .nav-i { width: 16px; height: 14px; margin-right: 13px; }
    .reload { height: 16px; }
    .omni { width: 1240px; height: 27px; margin-left: -2px; background: #fff; border: 1px solid #b2b2b2; border-radius: 2px; display: flex; align-items: center; padding: 0 4px 0 7px; margin-top: 1px; }
    .lock { width: 12px; height: 16px; margin-right: 7px; }
    .url { font-family: "Noto Sans", "Open Sans", sans-serif; font-size: 15.5px; line-height: 22px; }
    .g { color: #0a9a20; } .d { color: #8a8a8a; } .k { color: #000; }
    .oi { width: 15px; height: 17px; margin-left: 7px; }
    .star-i { width: 18px; height: 18px; margin-left: 6px; }
    .menu { width: 13px; height: 13px; margin-left: 10px; }

    .taskbar { height: 40px; background: linear-gradient(#33485a, #3a5166 8%, #384e63); display: flex; align-items: center; font-family: "Noto Sans", "Open Sans", sans-serif; font-size: 12px; color: #fff; }
    .k1 { width: 26px; height: 25px; margin-left: 12px; } .k2 { width: 30px; height: 30px; margin-left: 28px; }
    .k3 { width: 27px; height: 30px; margin-left: 34px; } .k4 { width: 30px; height: 31px; margin-left: 33px; margin-top: -1px; } .k5 { width: 30px; height: 31px; margin-left: 32px; }
    .app { width: 158.5px; height: 38px; border: 1px solid #8494a2; background: #5f7081; display: flex; align-items: center; flex: none; }
    .a1 { margin-left: 18px; } .a2 { margin-left: 3.5px; background: linear-gradient(#7c8a97, #95a1ab); border-color: #e4e9ec; } .a3 { margin-left: 3.5px; }
    .folder { width: 28px; height: 31px; margin: 0 6px 0 10px; }
    .chrome { width: 28px; height: 28px; margin: 0 6px 0 10px; }
    .fw { width: 28px; height: 26px; margin: -3px 6px 0 10px; border: 2px solid #e3df00; background: #2f2a08; color: #e8e800; font: bold 14px/22px "Liberation Sans", sans-serif; padding-left: 2px; }
    .glow { width: 216px; height: 40px; margin-left: auto; margin-right: -216px; }
    .tray { width: 216px; height: 40px; display: flex; align-items: center; padding-left: 60px; z-index: 1; }
    .up { width: 8px; height: 5px; margin-top: 3px; } .bat { width: 9px; height: 16px; margin-left: 19px; } .sig { width: 16px; height: 12px; margin-left: 9px; }
    .clock { margin-left: 17px; display: flex; flex-direction: column; align-items: center; line-height: 17px; }
  `;
  render() {
    return html`<div class="page">${shots.map(renderShot)}${tabStrip()}</div>`;
  }
}
